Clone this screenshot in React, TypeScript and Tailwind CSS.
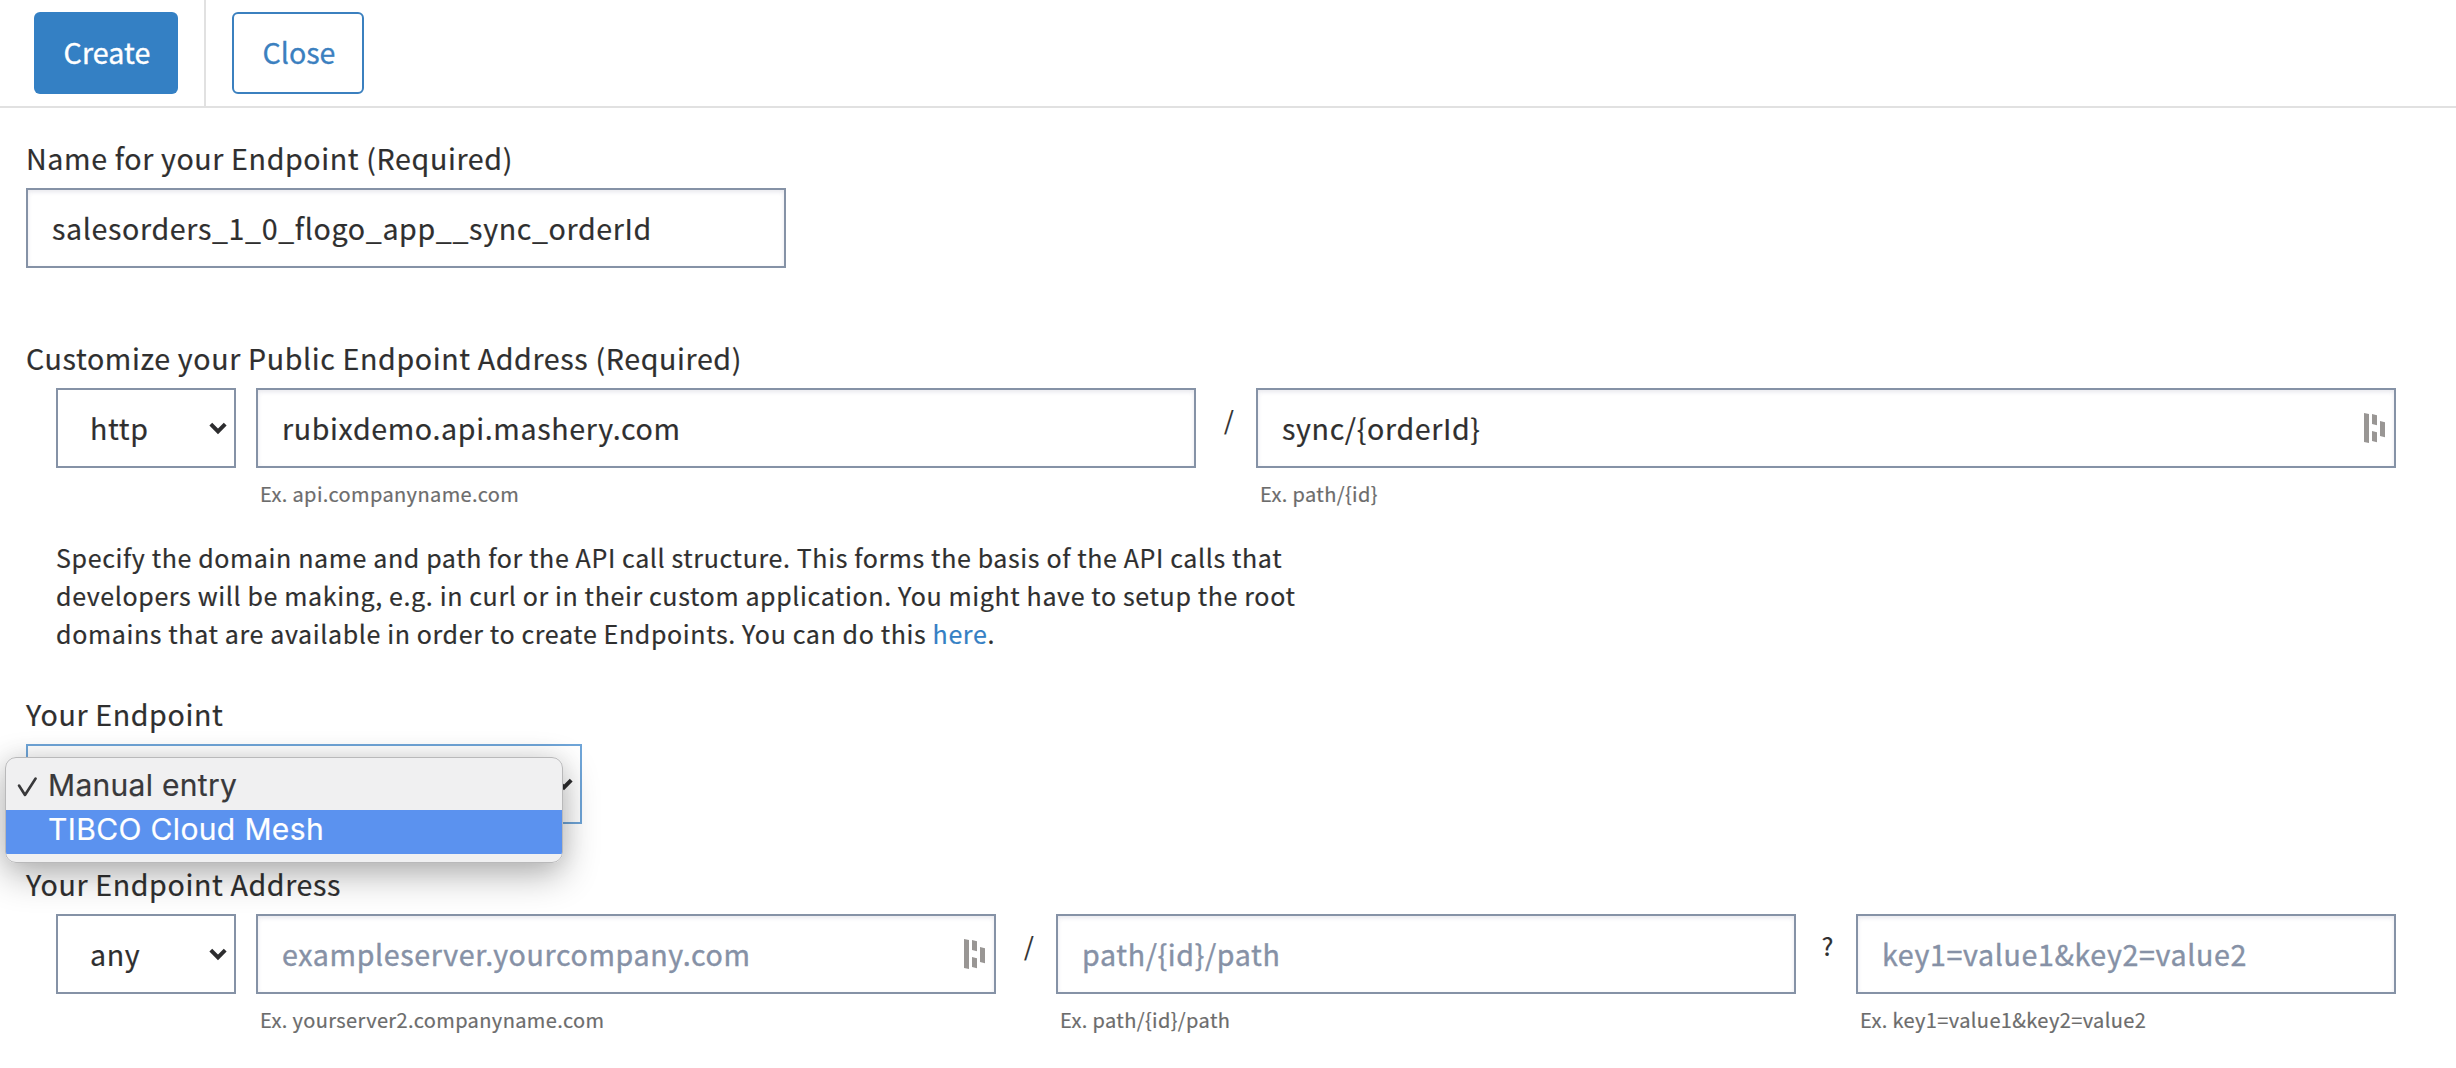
import type { ReactNode } from "react";
import { clsx } from "clsx";

function Chevron() {
  return (
    <svg width="20" height="14" viewBox="0 0 20 14" fill="none" className="absolute right-[6px] top-[32px]">
      <path d="M2.8 2.2 10 9.4l7.2-7.2" stroke="#2d2d2f" strokeWidth="4" />
    </svg>
  );
}

function ManagerIcon() {
  return (
    <svg width="21" height="30" viewBox="0 0 63 90" fill="#999694" className="absolute right-[11px] top-[25px]">
      <path d="M0 0l15 3v87l-15-3z" />
      <path d="M24 3l15 4v30l-15-4z" />
      <path d="M24 54l15 4v30l-15-4z" />
      <path d="M48 24l15 4v45l-15-4z" />
    </svg>
  );
}

function Label({ children }: { children: ReactNode }) {
  return <div className="mb-[10px] ml-[26px] h-10 text-[28.6px] leading-10 whitespace-nowrap">{children}</div>;
}

function Select({ value, className, children }: { value?: string; className: string; children?: ReactNode }) {
  return (
    <div
      className={clsx(
        "relative flex h-20 shrink-0 items-center border-2 bg-white pb-[2px] pl-[32px] text-[28.6px] leading-[41px]",
        className,
      )}
    >
      {value}
      <Chevron />
      {children}
    </div>
  );
}

type FieldProps = {
  className: string;
  value?: string;
  placeholder?: string;
  hint?: string;
  icon?: boolean;
};

function Field({ className, value, placeholder, hint, icon }: FieldProps) {
  return (
    <div className={clsx("relative shrink-0", className)}>
      <input
        type="text"
        readOnly
        value={value ?? ""}
        placeholder={placeholder}
        className="block h-20 w-full border-2 border-[#8592a6] bg-white px-6 pb-[2px] text-[28.6px] tracking-[0.64px] shadow-[inset_0_2px_4px_rgba(60,60,110,0.12)] outline-none placeholder:text-[#8691a6] placeholder:opacity-100 placeholder:[-webkit-text-stroke-width:0.4px]"
      />
      {icon && <ManagerIcon />}
      {hint && (
        <div className="mt-[10px] ml-1 h-[30px] text-[20px] leading-[31px] tracking-[0.38px] whitespace-nowrap text-[#6c6c6c]">
          {hint}
        </div>
      )}
    </div>
  );
}

function Separator({ children, className }: { children: ReactNode; className: string }) {
  return <div className={clsx("mt-3 w-[60px] shrink-0 text-[25px] leading-[38px]", className)}>{children}</div>;
}

function EndpointMenu() {
  return (
    <div className="absolute -left-[23px] top-[11px] z-10 w-[558px] rounded-[11px] shadow-[0_12px_36px_rgba(0,0,0,0.3),0_0_24px_rgba(0,0,0,0.08)]">
      <div className="h-[106px] overflow-hidden rounded-[11px] border border-[#b9b9ba] bg-[#f0f0f1] pt-2 font-['Inter'] text-[30px] tracking-[0.3px] whitespace-nowrap">
        <div className="flex h-11 items-center pb-[6px] text-[#39393b]">
          <svg width="42" height="30" viewBox="0 0 42 30" fill="none" className="shrink-0">
            <path d="M13 15.5l6 9.5 10.6-16.5" stroke="#39393b" strokeWidth="2.6" strokeLinecap="round" strokeLinejoin="round" />
          </svg>
          Manual entry
        </div>
        <div className="flex h-11 items-center bg-[#5b92ef] pb-[6px] pl-[42px] tracking-[0.36px] text-white">
          TIBCO Cloud Mesh
        </div>
      </div>
    </div>
  );
}

export default function App() {
  return (
    <div className="h-[1068px] w-[2456px] overflow-hidden bg-white font-['Noto_Sans_CJK_SC',sans-serif] tracking-[0.63px] text-[#2f2f2f] [-webkit-text-stroke-width:0.2px]">
      <header className="flex h-[108px] border-b-2 border-[#e1e1e1]">
        <div className="flex w-[206px] border-r-2 border-[#e1e1e1] pt-3 pl-[34px]">
          <button className="h-[82px] w-[144px] rounded-md bg-[#3480c4] pb-[1px] pl-[2px] text-[28.6px] tracking-[0.1px] text-white [-webkit-text-stroke-width:0.4px]">
            Create
          </button>
        </div>
        <div className="pt-3 pl-[26px]">
          <button className="h-[82px] w-[132px] rounded-md border-2 border-[#3b80bf] pb-[1px] pl-[2px] text-[28.6px] tracking-normal text-[#3b80bf] [-webkit-text-stroke-width:0.3px]">
            Close
          </button>
        </div>
      </header>

      <main className="pt-[30px]">
        <section className="mb-[70px]">
          <Label>Name for your Endpoint (Required)</Label>
          <Field className="ml-[26px] w-[760px]" value="salesorders_1_0_flogo_app__sync_orderId" />
        </section>

        <section className="mb-[42px]">
          <Label>Customize your Public Endpoint Address (Required)</Label>
          <div className="flex h-[130px] items-start pl-14">
            <Select value="http" className="mr-5 w-[180px] border-[#8592a6]" />
            <Field className="w-[940px]" value="rubixdemo.api.mashery.com" hint="Ex. api.companyname.com" />
            <Separator className="pl-[28px]">/</Separator>
            <Field className="w-[1140px]" value="sync/{orderId}" hint="Ex. path/{id}" icon />
          </div>
          <p className="mt-5 ml-14 text-[25px] leading-[38px] tracking-[0.625px] whitespace-nowrap">
            Specify the domain name and path for the API call structure. This forms the basis of the API calls that
            <br />
            developers will be making, e.g. in curl or in their custom application. You might have to setup the root
            <br />
            domains that are available in order to create Endpoints. You can do this{" "}
            <a className="text-[#3480c4]">here</a>.
          </p>
        </section>

        <section className="mb-10">
          <Label>Your Endpoint</Label>
          <Select className="ml-[26px] w-[556px] border-[#6fa5d8]">
            <EndpointMenu />
          </Select>
        </section>

        <section>
          <Label>Your Endpoint Address</Label>
          <div className="flex items-start pl-14">
            <Select value="any" className="mr-5 w-[180px] border-[#8592a6]" />
            <Field
              className="w-[740px]"
              placeholder="exampleserver.yourcompany.com"
              hint="Ex. yourserver2.companyname.com"
              icon
            />
            <Separator className="pl-[28px]">/</Separator>
            <Field className="w-[740px]" placeholder="path/{id}/path" hint="Ex. path/{id}/path" />
            <Separator className="pl-[25.5px]">?</Separator>
            <Field className="w-[540px]" placeholder="key1=value1&key2=value2" hint="Ex. key1=value1&key2=value2" />
          </div>
        </section>
      </main>
    </div>
  );
}
